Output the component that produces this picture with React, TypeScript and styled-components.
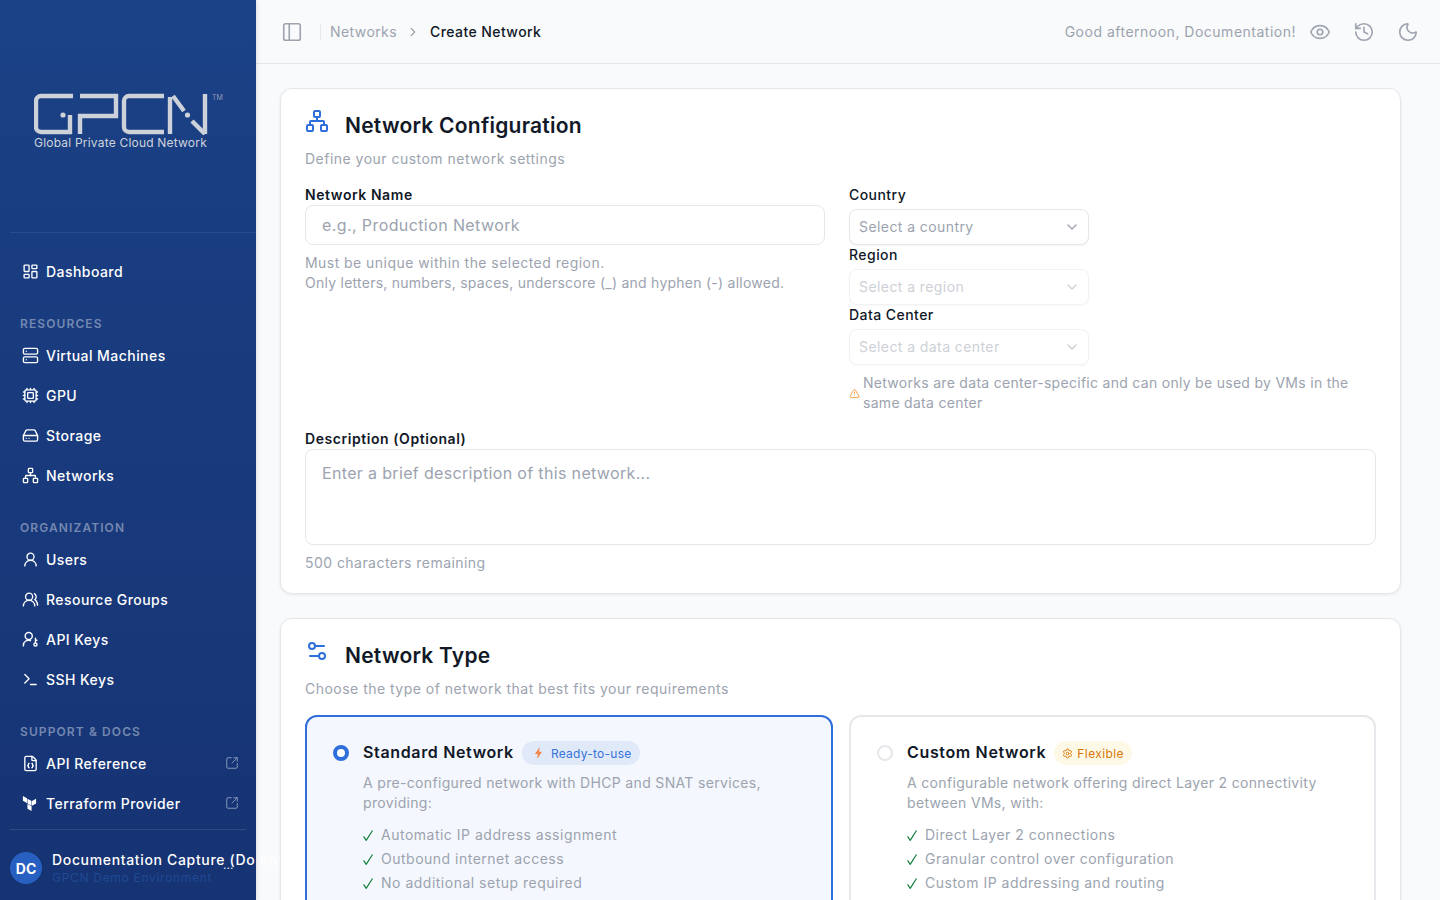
import * as React from "react"
import styled, { createGlobalStyle } from "styled-components"
import {
  ChevronDown,
  ChevronRight,
  Cpu,
  Eye,
  FileJson,
  HardDrive,
  History,
  LayoutDashboard,
  Moon,
  Network,
  PanelLeft,
  Server,
  Settings,
  Settings2,
  SquareArrowOutUpRight,
  Terminal,
  TriangleAlert,
  UserRound,
  UsersRound,
} from "lucide-react"
import { SiTerraform } from "react-icons/si"

const GlobalStyle = createGlobalStyle`
  html, body {
    margin: 0;
    height: 100%;
    overflow: hidden;
  }
  body {
    font-family: "Inter", "Noto Sans", sans-serif;
    color: #111827;
    background: #f9fafb;
  }
  * {
    box-sizing: border-box;
  }
`

const Shell = styled.div`
  display: flex;
  height: 100vh;
  overflow: hidden;
`

const Sidebar = styled.aside`
  flex: 0 0 256px;
  width: 256px;
  height: 100vh;
  display: flex;
  flex-direction: column;
  background: linear-gradient(180deg, #1b4186 0%, #163373 100%);
  box-shadow: 1px 0 4px rgba(17, 24, 39, 0.12);
  position: relative;
  z-index: 2;
`

const LogoArea = styled.div`
  height: 233px;
  margin-left: 10px;
  padding: 93px 0 0 24px;
  border-bottom: 1px solid rgba(255, 255, 255, 0.07);
  position: relative;
`

const LogoSvg = styled.svg`
  display: block;
  width: 174px;
  height: 42px;
`

const Trademark = styled.span`
  position: absolute;
  left: 202px;
  top: 93px;
  font-size: 7px;
  color: #8f9db9;
`

const LogoText = styled.div`
  font-size: 12px;
  line-height: 14px;
  letter-spacing: 0.2px;
  color: #cdd3dd;
  margin-top: 1px;
  white-space: nowrap;
`

const Nav = styled.nav`
  flex: 1;
  padding-top: 18px;
`

const NavGroup = styled.div`
  margin-bottom: 25px;
`

const NavHeading = styled.div`
  height: 16px;
  line-height: 16px;
  padding-left: 20px;
  margin-bottom: 3px;
  font-size: 12px;
  font-weight: 600;
  letter-spacing: 1.1px;
  color: #7488b0;
`

const NavItem = styled.a`
  height: 40px;
  display: flex;
  align-items: center;
  padding: 0 16px 0 22px;
  color: #ffffff;
  font-size: 14px;
  font-weight: 500;
  letter-spacing: 0.45px;
  white-space: nowrap;
`

const NavIcon = styled.span`
  width: 24px;
  height: 17px;
  display: flex;
  align-items: center;
  color: #ffffff;
`

const NavLabel = styled.span`
  flex: 1;
`

const ExternalMark = styled.span`
  display: flex;
  color: #8b9bbd;
  margin-right: 1px;
`

const SidebarFooter = styled.div`
  position: absolute;
  left: 10px;
  right: 10px;
  bottom: 0;
  height: 71px;
  border-top: 1px solid rgba(255, 255, 255, 0.1);
  display: flex;
  align-items: center;
  gap: 10px;
`

const Avatar = styled.div`
  flex: 0 0 32px;
  width: 32px;
  height: 32px;
  margin-top: 6px;
  border-radius: 50%;
  background: #2760c0;
  color: #ffffff;
  font-size: 14px;
  font-weight: 700;
  display: flex;
  align-items: center;
  justify-content: center;
`

const FooterText = styled.div`
  margin-top: 8px;
  white-space: nowrap;
`

const FooterName = styled.div`
  font-size: 14px;
  line-height: 18px;
  font-weight: 500;
  letter-spacing: 0.66px;
  color: #ffffff;
`

const FooterSub = styled.div`
  font-size: 12px;
  line-height: 18px;
  letter-spacing: 0.7px;
  color: #1f4a94;
`

const FooterDots = styled.span`
  position: absolute;
  left: 213px;
  top: 27px;
  font-size: 12px;
  color: #dfe5f0;
`

const Main = styled.main`
  flex: 1;
  min-width: 0;
  height: 100vh;
  overflow: hidden;
`

const TopBar = styled.header`
  height: 64px;
  display: flex;
  align-items: center;
  padding: 0 10px 0 25px;
  border-bottom: 1px solid #e5e7eb;
  background: #f9fafb;
`

const IconSlot = styled.span`
  display: flex;
  color: #9ca3af;
`

const Separator = styled.span`
  width: 1px;
  height: 16px;
  margin: 0 9px 0 17px;
  background: #e5e7eb;
`

const Crumb = styled.span<{ $current?: boolean }>`
  font-size: 14px;
  letter-spacing: 0.42px;
  color: ${(p) => (p.$current ? "#111827" : "#9ca3af")};
  font-weight: ${(p) => (p.$current ? 500 : 400)};
`

const CrumbArrow = styled.span`
  display: flex;
  color: #9ca3af;
  margin: 0 10px 0 9px;
`

const TopBarRight = styled.div`
  margin-left: auto;
  display: flex;
  align-items: center;
`

const Greeting = styled.span`
  font-size: 14px;
  letter-spacing: 0.5px;
  color: #9ca3af;
  margin-right: 2px;
`

const TopButton = styled.span`
  width: 44px;
  height: 40px;
  display: flex;
  align-items: center;
  justify-content: center;
  color: #9ca3af;
`

const Content = styled.div`
  padding: 24px 39px 0 24px;
  display: flex;
  flex-direction: column;
  gap: 24px;
`

const Card = styled.section`
  position: relative;
  z-index: 3;
  background: #ffffff;
  border: 1px solid #e5e7eb;
  border-radius: 12px;
  padding: 20px 24px 20px;
  box-shadow: 0 1px 3px rgba(17, 24, 39, 0.08);
`

const CardTitleRow = styled.div`
  display: flex;
  align-items: flex-start;
  gap: 16px;
  color: #2f6fdb;
`

const CardTitle = styled.h2`
  margin: 0;
  font-size: 21px;
  line-height: 34px;
  font-weight: 600;
  letter-spacing: 0.24px;
  color: #111827;
`

const CardSubtitle = styled.p`
  margin: 6px 0 16px;
  font-size: 14px;
  line-height: 20px;
  letter-spacing: 0.48px;
  color: #9ca3af;
`

const FormGrid = styled.div`
  display: grid;
  grid-template-columns: 520px 1fr;
  gap: 24px;
  margin-bottom: 16px;
`

const Label = styled.label<{ $strong?: boolean }>`
  display: block;
  font-size: 14px;
  line-height: 20px;
  font-weight: ${(p) => (p.$strong ? 600 : 500)};
  letter-spacing: ${(p) => (p.$strong ? "0.56px" : "0.45px")};
  color: #111827;
`

const TextInput = styled.input`
  display: block;
  width: 100%;
  height: 40px;
  padding: 0 16px;
  border: 1px solid #e5e7eb;
  border-radius: 8px;
  background: #ffffff;
  font: inherit;
  font-size: 16px;
  letter-spacing: 0.4px;
  outline: none;
  &::placeholder {
    color: #9ca3af;
  }
`

const TextArea = styled.textarea`
  display: block;
  width: 100%;
  height: 96px;
  padding: 11px 16px;
  border: 1px solid #e5e7eb;
  border-radius: 8px;
  background: #ffffff;
  font: inherit;
  font-size: 16px;
  line-height: 24px;
  letter-spacing: 0.34px;
  outline: none;
  resize: none;
  &::placeholder {
    color: #9ca3af;
  }
`

const Hint = styled.p`
  margin: 8px 0 0;
  font-size: 14px;
  line-height: 20px;
  letter-spacing: 0.45px;
  color: #9ca3af;
`

const TightLine = styled.span`
  letter-spacing: 0.25px;
`

const SelectBox = styled.div<{ $disabled?: boolean }>`
  width: 240px;
  height: 36px;
  margin-top: 4px;
  padding: 0 8px 0 9px;
  display: flex;
  align-items: center;
  justify-content: space-between;
  border: 1px solid #e5e7eb;
  border-radius: 8px;
  background: #ffffff;
  box-shadow: 0 1px 2px rgba(17, 24, 39, 0.05);
  font-size: 14px;
  letter-spacing: 0.42px;
  color: #9ca3af;
  opacity: ${(p) => (p.$disabled ? 0.5 : 1)};
`

const SelectText = styled.span`
  padding-bottom: 2px;
`

const WarningRow = styled.div`
  display: flex;
  align-items: center;
  gap: 3px;
  margin-top: 8px;
  color: #f59e42;
`

const WarningText = styled.span`
  font-size: 14px;
  line-height: 20px;
  letter-spacing: 0.29px;
  color: #9ca3af;
`

const OptionGrid = styled.div`
  display: grid;
  grid-template-columns: 528px 1fr;
  gap: 16px;
`

const Option = styled.div<{ $selected?: boolean }>`
  display: flex;
  align-items: flex-start;
  padding: 24px 24px 40px 26px;
  border: 2px solid ${(p) => (p.$selected ? "#2f6fdb" : "#e5e7eb")};
  border-radius: 12px;
  background: ${(p) => (p.$selected ? "#f4f7fd" : "#ffffff")};
`

const Radio = styled.span<{ $selected?: boolean }>`
  flex: 0 0 16px;
  width: 16px;
  height: 16px;
  margin: 4px 14px 0 0;
  border-radius: 50%;
  background: #ffffff;
  border: ${(p) => (p.$selected ? "4.5px solid #2f6fdb" : "2px solid #e5e7eb")};
`

const OptionBody = styled.div`
  min-width: 0;
`

const OptionTitleRow = styled.div`
  display: flex;
  align-items: center;
  gap: 8px;
  height: 24px;
`

const OptionTitle = styled.span`
  font-size: 16px;
  font-weight: 600;
  letter-spacing: 0.65px;
  color: #111827;
  padding-bottom: 2px;
`

const Badge = styled.span<{ $tone: "blue" | "amber" }>`
  height: 24px;
  padding: 0 8px 0 ${(p) => (p.$tone === "blue" ? "13px" : "8px")};
  display: inline-flex;
  align-items: center;
  gap: ${(p) => (p.$tone === "blue" ? "9px" : "4px")};
  border-radius: 12px;
  font-size: 12px;
  letter-spacing: ${(p) => (p.$tone === "blue" ? "0.26px" : "0.4px")};
  background: ${(p) => (p.$tone === "blue" ? "#e0e9f8" : "#fef9e7")};
  color: ${(p) => (p.$tone === "blue" ? "#3874d8" : "#d97706")};
`

const OptionText = styled.p`
  margin: 8px 0 12px;
  font-size: 14px;
  line-height: 20px;
  letter-spacing: 0.33px;
  color: #9ca3af;
`

const FeatureList = styled.ul`
  list-style: none;
  margin: 0;
  padding: 0;
  display: flex;
  flex-direction: column;
  gap: 4px;
`

const Feature = styled.li`
  display: flex;
  align-items: center;
  font-size: 14px;
  line-height: 20px;
  letter-spacing: 0.5px;
  color: #9ca3af;
`

const CheckSvg = styled.svg`
  flex: 0 0 10px;
  margin-right: 8px;
`

function CheckMark() {
  return (
    <CheckSvg width="10" height="11" viewBox="0 0 10 11" fill="none" stroke="#15803d" strokeWidth="1.2">
      <path d="M0.6 6.4L3.2 10.4L9.5 0.5" />
    </CheckSvg>
  )
}

function BoltIcon() {
  return (
    <svg width="7" height="12" viewBox="0 0 7 12" fill="#f2854a">
      <path d="M4.6 0L0 7h2.8L2.2 12L7 4.800H4.100z" />
    </svg>
  )
}

function KeyUserIcon() {
  return (
    <svg width="17" height="17" viewBox="0 0 24 24" fill="none" stroke="currentColor" strokeWidth="2" strokeLinecap="round" strokeLinejoin="round">
      <circle cx="9.5" cy="7" r="5" />
      <path d="M2 21v-1a7 7 0 0 1 10-6.3" />
      <circle cx="19" cy="19" r="2.2" />
      <path d="M19 16.8V10M19 13h2" />
    </svg>
  )
}

function GpcnLogo() {
  return (
    <LogoSvg viewBox="34 93 174 42" fill="none" stroke="#cdd1d9" strokeWidth="4.4">
      <path d="M73 96H41a5 5 0 0 0-5 5v26a5 5 0 0 0 5 5h29v-17" />
      <circle cx="63" cy="115" r="2.6" fill="#cdd1d9" stroke="none" />
      <path d="M80 134v-18h36V96H80" />
      <path d="M164 96h-35a5 5 0 0 0-5 5v26a5 5 0 0 0 5 5h35" />
      <path d="M170 134V97" />
      <path d="M173 96l11 15M192 121l13 13" />
      <circle cx="187.500" cy="115" r="2.6" fill="#cdd1d9" stroke="none" />
      <path d="M205 134V94" />
    </LogoSvg>
  )
}

const groups = [
  {
    title: "RESOURCES",
    items: [
      { label: "Virtual Machines", icon: <Server size={17} strokeWidth={1.9} /> },
      { label: "GPU", icon: <Cpu size={17} strokeWidth={1.9} /> },
      { label: "Storage", icon: <HardDrive size={17} strokeWidth={1.9} /> },
      { label: "Networks", icon: <Network size={17} strokeWidth={1.9} /> },
    ],
  },
  {
    title: "ORGANIZATION",
    items: [
      { label: "Users", icon: <UserRound size={17} strokeWidth={1.9} /> },
      { label: "Resource Groups", icon: <UsersRound size={17} strokeWidth={1.9} /> },
      { label: "API Keys", icon: <KeyUserIcon /> },
      { label: "SSH Keys", icon: <Terminal size={17} strokeWidth={1.9} /> },
    ],
  },
  {
    title: "SUPPORT & DOCS",
    items: [
      { label: "API Reference", icon: <FileJson size={17} strokeWidth={1.9} />, external: true },
      { label: "Terraform Provider", icon: <SiTerraform size={15} />, external: true },
    ],
  },
]

function SideNav() {
  return (
    <Sidebar>
      <LogoArea>
        <GpcnLogo />
        <Trademark>TM</Trademark>
        <LogoText>Global Private Cloud Network</LogoText>
      </LogoArea>
      <Nav>
        <NavGroup>
          <NavItem>
            <NavIcon>
              <LayoutDashboard size={17} strokeWidth={1.9} />
            </NavIcon>
            <NavLabel>Dashboard</NavLabel>
          </NavItem>
        </NavGroup>
        {groups.map((group) => (
          <NavGroup key={group.title}>
            <NavHeading>{group.title}</NavHeading>
            {group.items.map((item) => (
              <NavItem key={item.label}>
                <NavIcon>{item.icon}</NavIcon>
                <NavLabel>{item.label}</NavLabel>
                {"external" in item && (
                  <ExternalMark>
                    <SquareArrowOutUpRight size={14} strokeWidth={1.6} />
                  </ExternalMark>
                )}
              </NavItem>
            ))}
          </NavGroup>
        ))}
      </Nav>
      <SidebarFooter>
        <Avatar>DC</Avatar>
        <FooterText>
          <FooterName>Documentation Capture (Do not use)</FooterName>
          <FooterSub>GPCN Demo Environment</FooterSub>
        </FooterText>
        <FooterDots>...</FooterDots>
      </SidebarFooter>
    </Sidebar>
  )
}

function Header() {
  return (
    <TopBar>
      <IconSlot>
        <PanelLeft size={22} strokeWidth={1.75} />
      </IconSlot>
      <Separator />
      <Crumb>Networks</Crumb>
      <CrumbArrow>
        <ChevronRight size={14} />
      </CrumbArrow>
      <Crumb $current>Create Network</Crumb>
      <TopBarRight>
        <Greeting>Good afternoon, Documentation!</Greeting>
        <TopButton>
          <Eye size={22} strokeWidth={1.75} />
        </TopButton>
        <TopButton>
          <History size={22} strokeWidth={1.75} />
        </TopButton>
        <TopButton>
          <Moon size={22} strokeWidth={1.75} />
        </TopButton>
      </TopBarRight>
    </TopBar>
  )
}

function SelectField({ label, placeholder, disabled }: { label: string; placeholder: string; disabled?: boolean }) {
  return (
    <div>
      <Label>{label}</Label>
      <SelectBox $disabled={disabled}>
        <SelectText>{placeholder}</SelectText>
        <ChevronDown size={16} />
      </SelectBox>
    </div>
  )
}

function ConfigCard() {
  return (
    <Card>
      <CardTitleRow>
        <Network size={24} />
        <CardTitle>Network Configuration</CardTitle>
      </CardTitleRow>
      <CardSubtitle>Define your custom network settings</CardSubtitle>
      <FormGrid>
        <div>
          <Label $strong>Network Name</Label>
          <TextInput placeholder="e.g., Production Network" />
          <Hint>
            Must be unique within the selected region.
            <br />
            <TightLine>Only letters, numbers, spaces, underscore (_) and hyphen (-) allowed.</TightLine>
          </Hint>
        </div>
        <div>
          <SelectField label="Country" placeholder="Select a country" />
          <SelectField label="Region" placeholder="Select a region" disabled />
          <SelectField label="Data Center" placeholder="Select a data center" disabled />
          <WarningRow>
            <TriangleAlert size={11} style={{ flex: "0 0 11px" }} />
            <WarningText>Networks are data center-specific and can only be used by VMs in the same data center</WarningText>
          </WarningRow>
        </div>
      </FormGrid>
      <Label $strong>Description (Optional)</Label>
      <TextArea placeholder="Enter a brief description of this network..." />
      <Hint>500 characters remaining</Hint>
    </Card>
  )
}

function TypeCard() {
  return (
    <Card>
      <CardTitleRow>
        <Settings2 size={24} />
        <CardTitle>Network Type</CardTitle>
      </CardTitleRow>
      <CardSubtitle>Choose the type of network that best fits your requirements</CardSubtitle>
      <OptionGrid>
        <Option $selected>
          <Radio $selected />
          <OptionBody>
            <OptionTitleRow>
              <OptionTitle>Standard Network</OptionTitle>
              <Badge $tone="blue">
                <BoltIcon />
                Ready-to-use
              </Badge>
            </OptionTitleRow>
            <OptionText>A pre-configured network with DHCP and SNAT services, providing:</OptionText>
            <FeatureList>
              <Feature>
                <CheckMark />Automatic IP address assignment
              </Feature>
              <Feature>
                <CheckMark />Outbound internet access
              </Feature>
              <Feature>
                <CheckMark />No additional setup required
              </Feature>
            </FeatureList>
          </OptionBody>
        </Option>
        <Option>
          <Radio />
          <OptionBody>
            <OptionTitleRow>
              <OptionTitle>Custom Network</OptionTitle>
              <Badge $tone="amber">
                <Settings size={11} />
                Flexible
              </Badge>
            </OptionTitleRow>
            <OptionText>A configurable network offering direct Layer 2 connectivity between VMs, with:</OptionText>
            <FeatureList>
              <Feature>
                <CheckMark />Direct Layer 2 connections
              </Feature>
              <Feature>
                <CheckMark />Granular control over configuration
              </Feature>
              <Feature>
                <CheckMark />Custom IP addressing and routing
              </Feature>
            </FeatureList>
          </OptionBody>
        </Option>
      </OptionGrid>
    </Card>
  )
}

export default function App() {
  return (
    <>
      <GlobalStyle />
      <Shell>
        <SideNav />
        <Main>
          <Header />
          <Content>
            <ConfigCard />
            <TypeCard />
          </Content>
        </Main>
      </Shell>
    </>
  )
}
